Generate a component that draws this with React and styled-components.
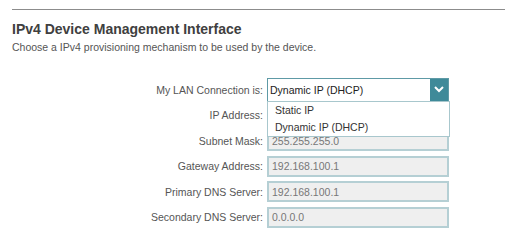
import React from "react";
import styled, { createGlobalStyle } from "styled-components";

const GlobalStyle = createGlobalStyle`
   body {
      margin: 0;
      background: #fff;
      font-family: "Liberation Sans", Arial, sans-serif;
   }
`;

const Page = styled.div`
   width: 507px;
   height: 252px;
   padding: 9px 2px 0 12px;
   box-sizing: border-box;
   overflow: hidden;
`;

const Rule = styled.div`
   height: 1px;
   border-top: 1px solid #8c8c8c;
`;

const Title = styled.h1`
   margin: 10px 0 0;
   font-size: 14px;
   line-height: 16px;
   font-weight: bold;
   color: #404040;
`;

const Subtitle = styled.p`
   margin: 4px 0 0;
   font-size: 10.5px;
   line-height: 13px;
   color: #555;
`;

const Form = styled.div`
   margin-top: 23px;
   display: grid;
   grid-template-columns: 251px 182px;
   grid-auto-rows: 25.5px;
   column-gap: 4px;
   align-items: center;
`;

const Label = styled.label`
   text-align: right;
   font-size: 10.5px;
   color: #555;
   white-space: nowrap;
`;

const Field = styled.div`
   position: relative;
   height: ${(p) => (p.$select ? "24px" : "21px")};
`;

const SelectBox = styled.div`
   height: 100%;
   box-sizing: border-box;
   border: 1px solid #5e9aa6;
   background: #fff;
   display: flex;
   align-items: center;
   font-size: 10.5px;
   color: #222;
   padding-left: 2px;
`;

const SelectValue = styled.span`
   flex: 1;
`;

const Chevron = styled.div`
   width: 18px;
   height: 100%;
   background: #3f8a99;
   display: flex;
   align-items: center;
   justify-content: center;
`;

const Menu = styled.ul`
   position: absolute;
   top: 23px;
   left: 0;
   width: 183px;
   margin: 0;
   padding: 0;
   list-style: none;
   box-sizing: border-box;
   background: #fff;
   border: 1px solid #a8c7cd;
   z-index: 2;
`;

const MenuItem = styled.li`
   font-size: 10.5px;
   line-height: 17px;
   color: #333;
   padding-left: 7px;
`;

const Input = styled.div`
   height: 100%;
   box-sizing: border-box;
   border: 2px solid #b5cfd4;
   background: #efefef;
   font-size: 10.5px;
   color: #777;
   padding-left: 3px;
   display: flex;
   align-items: center;
`;

const rows = [
   ["IP Address:", ""],
   ["Subnet Mask:", "255.255.255.0"],
   ["Gateway Address:", "192.168.100.1"],
   ["Primary DNS Server:", "192.168.100.1"],
   ["Secondary DNS Server:", "0.0.0.0"],
];

export default function App() {
   return (
      <>
         <GlobalStyle />
         <Page>
            <Rule />
            <Title>IPv4 Device Management Interface</Title>
            <Subtitle>Choose a IPv4 provisioning mechanism to be used by the device.</Subtitle>
            <Form>
               <Label>My LAN Connection is:</Label>
               <Field $select>
                  <SelectBox>
                     <SelectValue>Dynamic IP (DHCP)</SelectValue>
                     <Chevron>
                        <svg width="10" height="7" viewBox="0 0 10 7">
                           <path d="M1 1 L5 5 L9 1" stroke="#fff" strokeWidth="2" fill="none" />
                        </svg>
                     </Chevron>
                  </SelectBox>
                  <Menu>
                     <MenuItem>Static IP</MenuItem>
                     <MenuItem>Dynamic IP (DHCP)</MenuItem>
                  </Menu>
               </Field>
               {rows.map(([label, value]) => (
                  <React.Fragment key={label}>
                     <Label>{label}</Label>
                     <Field>
                        <Input>{value}</Input>
                     </Field>
                  </React.Fragment>
               ))}
            </Form>
         </Page>
      </>
   );
}
